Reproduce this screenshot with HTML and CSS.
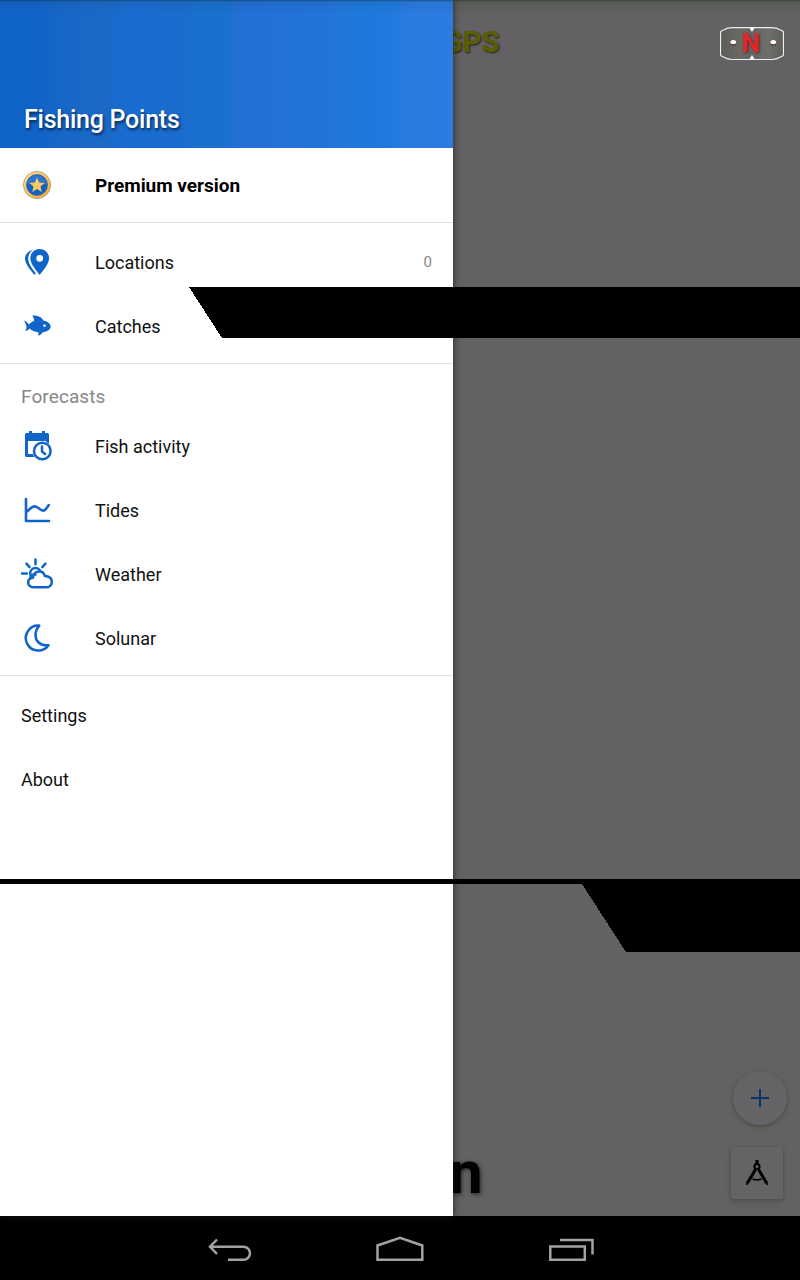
FILE: index.html
```html
<!DOCTYPE html>
<html lang="en">
<head>
<meta charset="utf-8">
<title>Fishing Points</title>
<link rel="stylesheet" href="styles.css">
</head>
<body>
<div class="device">
  <div class="screen">
    <nav class="drawer">
      <header class="brand"><h1 class="brand-name">Fishing Points</h1></header>
      <section class="group premium">
        <a class="row strong"><svg class="icon" viewBox="0 0 32 32"><defs><linearGradient id="gold" x1="0" y1="0" x2="1" y2="1"><stop offset="0" stop-color="#ffe29a"/><stop offset="1" stop-color="#f8a51c"/></linearGradient></defs><circle cx="16" cy="16" r="13.6" fill="url(#gold)" stroke="#a3947f" stroke-width=".8"/><circle cx="16" cy="16" r="10.6" fill="#1262c4" stroke="#54699a" stroke-width=".7"/><path d="M6.500 15.500a9.500 9.500 0 0 1 19 0q-9-3-19 0z" fill="#2d76cf"/><path d="M16 8.500l2.200 5 5.400.5-4.100 3.600 1.200 5.300-4.700-2.800-4.700 2.800 1.200-5.300L8.400 14l5.400-.5z" fill="#fcc863"/></svg><span class="label">Premium version</span></a>
      </section>
      <section class="group">
        <a class="row"><svg class="icon" viewBox="0 0 32 32"><path d="M18.700 3c-5.400 0-9.400 4-9.400 9.300 0 6.200 6.500 12.400 9.400 16.700 2.900-4.300 9.400-10.500 9.400-16.700C28.100 7 24 3 18.700 3zm0 5.900a3.400 3.400 0 1 1 0 6.800 3.400 3.400 0 0 1 0-6.800z" fill="#1065c8" fill-rule="evenodd"/><path d="M12 3.600C7 5.300 4 8.500 4 12.500c0 6.300 6.500 12 9.300 16.500l1.400-2C11.500 22.800 7.200 17.800 7.200 12.500c0-3.700 2.300-6.900 4.800-8.900z" fill="#1065c8"/></svg><span class="label">Locations</span><span class="count">0</span></a>
        <a class="row"><svg class="icon" viewBox="0 0 32 32"><path d="M3 10.500c2.200.7 3.500 2 4.700 4.100 1.600-1.700 3.300-2.900 5.400-3.600 0-2-.5-3.400-1.900-5.400 4.500-.2 9.600 1.100 11.200 4.900 4.200 1 6.300 2.600 7.300 5.500 0 3.900-3.200 5.600-8 6.200-1 1.600-2.600 3.200-4.600 3.500.6-1.500.5-2.500.1-3.500-3.300-.4-6.300-1.600-8.700-3.700-1.200 1.500-2.500 2.200-4.300 2.600.8-1.600 1.300-2.700 1.300-4.500C4.900 14.500 4.200 12.500 3 10.500zm20.500 3.800a1.300 1.300 0 1 0 .01 0z" fill="#1065c8" fill-rule="evenodd"/></svg><span class="label">Catches</span></a>
      </section>
      <section class="group forecasts">
        <h2 class="heading">Forecasts</h2>
        <a class="row"><svg class="icon" viewBox="0 0 32 32"><path d="M4 4.500q0-1.500 1.500-1.500H8V1h3v2h10V1h3v2h2.500Q28 3 28 4.500V14h-3v-3H7v13h8v3H5.500Q4 27 4 25.500z" fill="#1065c8"/><circle cx="21.300" cy="21" r="9.900" fill="#fff"/><circle cx="21.300" cy="21" r="8.300" class="line dial"/><path d="M21 16.500v5l3.200 2.500" class="line"/></svg><span class="label">Fish activity</span></a>
        <a class="row"><svg class="icon" viewBox="0 0 32 32"><path d="M5 5v22H28M6 17.500l4.500-4 3-1.200c4 .2 5 4.400 9 4.400 2.500-.8 3.800-3.600 5.300-5.700" class="line heavy"/></svg><span class="label">Tides</span></a>
        <a class="row"><svg class="icon" viewBox="0 0 32 32"><path d="M14.500 1.500v4.700M5.500 5.600l3 3.500M24.500 5.600l-3.200 3.500M.9 15.500h5" class="line"/><circle cx="14.500" cy="15.300" r="5.300" class="line"/><path d="M12.300 29.200c-3 0-5.100-2-5.100-4.800 0-2.600 1.800-4.400 4.700-4.700 1.200-7.400 10-8.500 12-1.700 4.700.2 6.900 2.700 6.900 5.800 0 3.200-2.200 5.400-5 5.400z" class="line dial"/><path d="M9.300 20.500c0-2.600 1.900-4.300 5.100-3.800" class="line"/></svg><span class="label">Weather</span></a>
        <a class="row"><svg class="icon" viewBox="0 0 32 32"><path d="M18.300 3.600A12.500 12.500 0 1 0 27.500 23.300C18.500 24 14.500 18.500 14.500 13 14.500 9.200 16 6 18.300 3.600z" class="line"/></svg><span class="label">Solunar</span></a>
      </section>
      <section class="group plain">
        <a class="row">Settings</a>
        <a class="row">About</a>
      </section>
    </nav>
    <main class="map">
      <div class="map-top"><span class="gps">GPS</span>
        <svg class="compass" viewBox="0 0 64 34"><defs><linearGradient id="dial"><stop offset="0" stop-color="#5d5c5b"/><stop offset=".3" stop-color="#6a6964"/><stop offset=".5" stop-color="#626462"/><stop offset=".75" stop-color="#6c706a"/><stop offset="1" stop-color="#5e5d5d"/></linearGradient></defs><path d="M.5 5.500q0-1.500 3-2.500 4-2.300 9-2.300h39q5 0 9 2.300 3 1 3 2.500v22q0 1.500-3 2.500-4 2.500-9 2.500h-39q-5 0-9-2.500-3-1-3-2.500z" fill="url(#dial)" stroke="#eee" stroke-width="1.200"/><path d="M29.500 1h5L32 5zM29.500 32h5L32 28z" fill="#fff"/><circle cx="13.300" cy="16" r="3" fill="#633"/><circle cx="53.300" cy="16" r="3" fill="#633"/><path d="M10.300 16a3 3 0 0 1 6 0q-3 2.500-6 0zM50.300 16a3 3 0 0 1 6 0q-3 2.500-6 0z" fill="#fff"/><text x="31" y="24.500" class="north">N</text></svg>
      </div>
      <div class="map-bottom"><span class="scale">n</span>
        <div class="tools">
          <div class="fab"><svg width="20" height="20"><path d="M10 1v18M1 10h18" stroke="#0a3367" stroke-width="2"/></svg></div>
          <div class="tool"><svg width="24" height="28" viewBox="0 0 24 28" fill="none" stroke="#000"><path d="M12 1v4" stroke-width="3"/><circle cx="12" cy="7.500" r="2.600" stroke-width="2"/><path d="M10.700 10L2.500 24M13.300 10l8.200 14" stroke-width="3"/><path d="M7.500 20q4.500 1.600 9 0" stroke-width="1.800"/><path d="M2.600 22l-1 4M21.400 22l1 4" stroke-width="1.500"/></svg></div>
        </div>
      </div>
    </main>
    <svg class="glitch" viewBox="0 0 800 1216" shape-rendering="crispEdges"><path d="M189 287H800V338H222zM0 879H800V952H626L582 884H0z"/></svg>
  </div>
  <footer class="navbar">
    <svg viewBox="0 0 430 64"><path d="M27 23.500L20 30.700l7 7.300M21 30.700h32.500a6.500 6.500 0 0 1 0 13H38M187.500 43.700V29.500L210 21.700l22.300 7.800V43.700zM360.300 30.500h34.500V43.700h-34.500zM370 24h32.500v14.500"/></svg>
  </footer>
</div>
</body>
</html>
```
FILE: styles.css
```css
* { box-sizing: border-box; }
body { margin: 0; font-family: Roboto, sans-serif; font-size: 18px; color: #111; }
.device { width: 800px; height: 1280px; display: flex; flex-direction: column; overflow: hidden; }
.screen { height: 1216px; display: flex; position: relative; }
.drawer { width: 453px; background: #fff; z-index: 1; box-shadow: 0 0 6px 1px rgba(20, 28, 16, .65); }
.brand {
  height: 148px; padding: 0 0 13px 24px; display: flex; align-items: flex-end;
  background: linear-gradient(to bottom, rgba(20, 50, 80, .6) 0, rgba(20, 80, 120, .15) 2px, transparent 14px),
    linear-gradient(to right, #1063c7 0, #1063c7 38px, #1867c6 65px, #1b69c7 108px, #196cd0 125px, #1a6ccd 180px, #1871cd 205px, #1871cd 222px, #236fd5 240px, #2274d8 325px, #1f79d9 350px, #1f79df 390px, #2b7bdf 410px, #2b7be0 453px);
}
.brand-name { margin: 0; font: 500 25px/31px Roboto, sans-serif; letter-spacing: -.25px; color: #fff; text-shadow: 1px 2px 3px rgba(0, 20, 50, .8); }
.group { padding: 7px 0 5px; border-bottom: 1px solid #e1e1e1; }
.premium { padding: 5px 0; }
.forecasts { padding-top: 0; }
.plain { border-bottom: 0; }
.row { height: 64px; display: flex; align-items: center; padding: 0 21px; letter-spacing: 0; }
.icon { width: 32px; height: 32px; flex: none; }
.label { margin-left: 42px; flex: 1; }
.strong { font-size: 19px; font-weight: 700; letter-spacing: -.03px; color: #000; }
.count { font-size: 15px; color: #888; }
.heading { margin: 0; height: 50px; padding: 15px 21px 0; font-size: 19px; line-height: 35px; font-weight: 400; letter-spacing: .1px; color: #878787; }
.line { fill: none; stroke: #1065c8; stroke-width: 2.5; stroke-linecap: round; stroke-linejoin: round; }
.dial { fill: #fff; }
.heavy { stroke-width: 2.6; }
.map { width: 347px; overflow: hidden; display: flex; flex-direction: column; justify-content: space-between; background: linear-gradient(#40453f 0, #575953 2px, #5c5e59 6px, #636163 14px); }
.map-top { display: flex; justify-content: space-between; padding: 25px 16px 0 0; }
.gps { margin-left: -10px; font-size: 29px; line-height: 34px; font-weight: 700; color: #5c5c00; text-shadow: 1px 1px 2px #222; }
.compass { width: 64px; height: 34px; margin-top: 2px; }
.north { font: 700 26px Roboto, sans-serif; fill: #e72427; text-anchor: middle; filter: drop-shadow(1px 1px 1px #622); }
.map-bottom { display: flex; justify-content: space-between; align-items: flex-end; padding: 0 13px 17px 0; }
.scale { margin-left: -4px; margin-bottom: -9px; font-size: 60px; line-height: 70px; font-weight: 700; color: #000; text-shadow: 1px 1px 4px #222; }
.tools { display: flex; flex-direction: column; align-items: flex-end; gap: 22px; }
.fab, .tool { display: flex; align-items: center; justify-content: center; background: #656365; box-shadow: 0 1px 3px #4d504a, 0 3px 5px #555852; }
.fab { width: 54px; height: 54px; border-radius: 50%; }
.tool { width: 52px; height: 52px; margin-right: 4px; border-radius: 3px; }
.glitch { position: absolute; inset: 0; width: 800px; height: 1216px; z-index: 2; }
.navbar { height: 64px; background: #000; display: flex; padding-left: 190px; }
.navbar svg { width: 430px; height: 64px; fill: none; stroke: #a2a2a2; stroke-width: 2.5; }
```
